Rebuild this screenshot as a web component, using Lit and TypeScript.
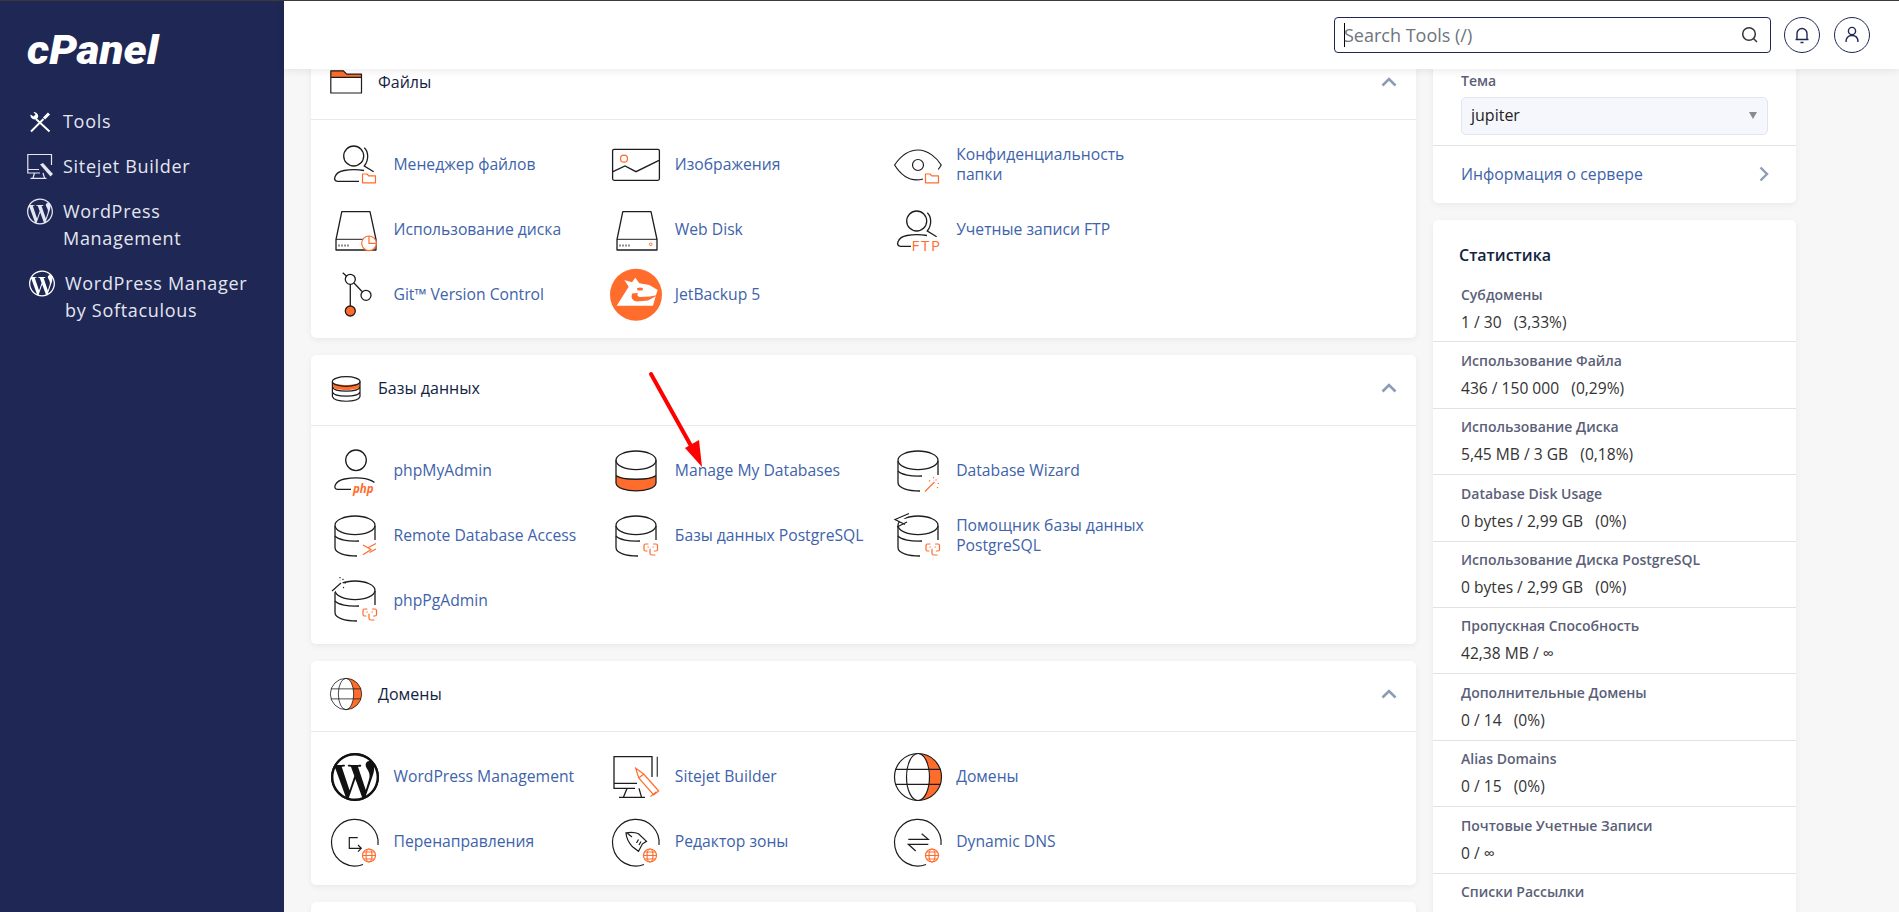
import { LitElement, html, css, svg } from 'lit';
import { customElement } from 'lit/decorators.js';

const INK = '#1d1d1d';
const ORANGE = '#ff6c2c';

const WP_PATH =
  'M21.469 6.825c.84 1.537 1.318 3.3 1.318 5.175 0 3.979-2.156 7.456-5.363 9.325l3.295-9.527c.615-1.54.82-2.771.82-3.864 0-.405-.026-.78-.07-1.11m-7.981.105c.647-.03 1.232-.105 1.232-.105.582-.075.514-.93-.067-.899 0 0-1.755.135-2.88.135-1.064 0-2.85-.15-2.85-.15-.585-.03-.661.855-.075.885 0 0 .54.061 1.125.09l1.68 4.605-2.37 7.08L5.354 6.9c.649-.03 1.234-.1 1.234-.1.585-.075.516-.93-.065-.896 0 0-1.746.138-2.874.138-.2 0-.438-.008-.69-.015C4.911 3.15 8.235 1.215 12 1.215c2.809 0 5.365 1.072 7.286 2.833-.046-.003-.091-.009-.141-.009-1.06 0-1.812.923-1.812 1.914 0 .89.513 1.643 1.06 2.531.411.72.89 1.643.89 2.977 0 .915-.354 2-.821 3.479l-1.075 3.585-3.9-11.61.001.014zM12 22.784c-1.059 0-2.081-.153-3.048-.437l3.237-9.406 3.315 9.087c.024.053.05.101.078.149-1.12.393-2.325.609-3.582.609M1.211 12c0-1.564.336-3.05.935-4.39L7.29 21.709C3.694 19.96 1.212 16.271 1.211 12M12 0C5.385 0 0 5.385 0 12s5.385 12 12 12 12-5.385 12-12S18.615 0 12 0';

// small orange marks that sit in the corner of the tool icons
const folderBadge = svg`<path d="M31.5 41.8V33h4.6l1.6 1.8h6.8v7H31.5z" fill="#fff" stroke=${ORANGE} stroke-width="1.2" stroke-linejoin="round"/>`;
const globeBadge = svg`<g fill="none" stroke=${ORANGE} stroke-width="1.2"><circle cx="38" cy="37.5" r="6.5" fill="#fff"/><ellipse cx="38" cy="37.5" rx="3" ry="6.5"/><path d="M31.5 37.5h13M32.5 34h11M32.5 41h11"/></g>`;
const pgBadge = svg`<g fill="none" stroke=${ORANGE} stroke-width="1.2" stroke-linecap="round"><path d="M36 32h-2.500Q32 32 32 33.500v4Q32 39 33.500 39H35M41.500 32H44q1.500 0 1.500 1.500v4Q45.500 39 44 39h-1.500"/><path d="M38 37v4.500q0 1.500 2 1.500h3"/><path d="M36 35h.4M41 35h.4"/></g>`;
const wandBadge = svg`<g fill="none" stroke=${ORANGE} stroke-width="1.1"><path d="M31 44.500 40.500 35"/><path stroke-dasharray="1.300 2.500" d="M39.500 30v4M45 36.500h-4M42.500 32.500l-1 1M44 41l-2-2M35 33.500l2 1.500"/></g>`;
const remoteBadge = svg`<path d="M32 33l8 4.500-8 5.300M45 31.500 36.500 36M45 37l-6.500 3.500" fill="none" stroke=${ORANGE} stroke-width="1.200"/>`;

// the two-tier database drawing; the lower tier stops short of the badge corner
const dbBase = svg`<g fill="none" stroke=${INK} stroke-width="1.300">
  <ellipse cx="24" cy="13.300" rx="20" ry="9.300"/>
  <path d="M4 14v21.500C4 41 14 44 26 44"/>
  <path d="M44 14v14"/>
  <path d="M4 24c3 3.600 13 5.600 24 5"/>
</g>`;

const disk = svg`<path d="M10.800 5.700h28.200L45 33.500V44H5V33.500L10.800 5.700z" fill="none" stroke=${INK} stroke-width="1.300" stroke-linejoin="round"/><path d="M5 33.300h40M8 40.500v-2M11 40.500v-2M14 40.500v-2M17 40.500v-2" fill="none" stroke=${INK} stroke-width="1"/>`;

const personBack = svg`<g fill="none" stroke=${INK} stroke-width="1.300"><circle cx="22.700" cy="15" r="10"/><path d="M33.300 6.700c3.800 3.400 5.200 11.600 0 18.300l9.400 5.700"/><path d="M28 40.300H6.500c-5 0-3.800-8.800 6.500-10.800 6.800-1.200 14-1 20 0"/></g>`;

const circleOpen = svg`<path d="M32 46.500A23.300 23.300 0 1 1 47 27" fill="none" stroke=${INK} stroke-width="1.200"/>`;

const globeLarge = svg`<g fill="none" stroke=${INK} stroke-width="1.200">
  <path d="M24 .5A23.500 23.500 0 0 1 24 47.500A11.500 23.500 0 0 0 24 .5z" fill=${ORANGE} stroke="none"/>
  <circle cx="24" cy="24" r="23.500"/>
  <ellipse cx="24" cy="24" rx="11.500" ry="23.500"/>
  <path d="M1.500 16.300h45M1.500 31.300h45"/>
</g>`;

const icons: Record<string, unknown> = {
  fileManager: svg`${personBack}${folderBadge}`,
  images: svg`<rect x=".6" y="8.300" width="46.800" height="31" rx="1.500" fill="none" stroke=${INK} stroke-width="1.300"/><circle cx="12" cy="17.700" r="3.500" fill="none" stroke=${ORANGE} stroke-width="1.200"/><path d="M1 30.700 13 25 24 30.700 47 19.300" fill="none" stroke=${INK} stroke-width="1.300"/>`,
  privacy: svg`<path d="M29 38C14 42 5 31 .6 24 6 16 14 9 24 9s19 8 23.200 15c-.6 1.200-1.700 2.800-3 4.500" fill="none" stroke=${INK} stroke-width="1.200"/><circle cx="24" cy="24" r="5.500" fill="none" stroke=${INK} stroke-width="1.200"/>${folderBadge}`,
  diskUsage: svg`${disk}<circle cx="38" cy="37.300" r="7.300" fill="#fff" stroke=${ORANGE} stroke-width="1.200"/><path d="M38 30v7.300h7" fill="none" stroke=${ORANGE} stroke-width="1.200"/>`,
  webDisk: svg`${disk}<circle cx="38.700" cy="38.300" r="1.300" fill="none" stroke=${ORANGE} stroke-width="1"/>`,
  ftp: svg`${personBack}<rect x="17" y="31.600" width="31" height="14" fill="#fff"/><text x="17.500" y="45" font-family="Open Sans, sans-serif" font-size="15" letter-spacing="1.800" fill=${ORANGE}>FTP</text>`,
  git: svg`<g fill="none" stroke=${INK} stroke-width="1.300"><circle cx="19.300" cy="8.300" r="5"/><circle cx="35" cy="24.300" r="5"/><path d="M19.300 13.300V35M23 12l8 8.500M11.700 1.700l4 3.500"/><circle cx="19.300" cy="40" r="5" fill=${ORANGE}/></g>`,
  jetBackup: svg`<circle cx="24" cy="23.700" r="26" fill=${ORANGE}/><path d="M4.700 34.700 16.700 15.700 12.300 9 20 11.300 23.300 6.700 27.300 12.300 37.300 14 45.700 19 44 24 41 34.700z" fill="#fff"/><ellipse cx="28" cy="18" rx="3" ry="1.500" fill=${ORANGE}/><path d="M20 22.500q-2 7 5 8l11-1 10-5.500-8 1.500-10 .5q-4-1-2-4z" fill=${ORANGE}/>`,
  phpMyAdmin: svg`<g fill="none" stroke=${INK} stroke-width="1.300"><circle cx="25" cy="13.300" r="10.300"/><path d="M20 42.300H6.500c-5 0-3-8.500 7-10.300 11-2 23.500-1.500 30 3.500"/></g><text x="22" y="46" font-family="Open Sans, sans-serif" font-size="11.500" font-weight="700" font-style="italic" fill=${ORANGE}>php</text>`,
  manageDb: svg`<path d="M4 28.500c6 5 34 5 40 0V36c-1 10.500-39 10.500-40 0z" fill=${ORANGE}/><g fill="none" stroke=${INK} stroke-width="1.300"><ellipse cx="24" cy="13.300" rx="20" ry="9.300"/><path d="M4 13.300V36c1 10.500 39 10.500 40 0V13.300"/><path d="M4 28.500c6 5 34 5 40 0"/></g>`,
  dbWizard: svg`${dbBase}${wandBadge}`,
  remoteDb: svg`${dbBase}${remoteBadge}`,
  postgres: svg`${dbBase}${pgBadge}`,
  pgWizard: svg`${dbBase}<path d="M13 2 5 7 13 11.500M15 9 6 14" fill="none" stroke="#fff" stroke-width="5"/><path d="M15 1.500 1 7.500 11 12.500M13 10 3 15" fill="none" stroke=${INK} stroke-width="1.200"/>${pgBadge}`,
  pgAdmin: svg`${dbBase}<path d="M0 15 11 5" stroke="#fff" stroke-width="5"/><path d="M1 14 10 6" stroke=${INK} stroke-width="1.200"/><path stroke-dasharray="1.300 2.500" d="M9 0v4M15 6h-4M12.500 2l-1.500 1M13 11l-2-2" stroke=${INK} stroke-width="1.100"/>${pgBadge}`,
  wordpress: svg`<circle cx="24" cy="24" r="23.500" fill="#fff" stroke=${INK} stroke-width="1"/><path transform="scale(2)" fill="#111" d=${WP_PATH}/>`,
  sitejet: svg`<path d="M40 24V3.700H2v31.700h21M2 30.300h23M15 35.400l-3.500 8.700M27 35.400l2.500 8.700M7 44.300h26" fill="none" stroke=${INK} stroke-width="1.300"/><path d="M45.300 3.700v20" stroke="#444" stroke-width="1.300"/><path d="M23.700 15.300l8 5.700 15 17-5 4-15-17zM26.700 25l5-4M38.500 43.500l6-4.800" fill="#fff" stroke=${ORANGE} stroke-width="1.200"/>`,
  domains: globeLarge,
  redirects: svg`${circleOpen}<path d="M26.700 19.700h-8.400V30.300H30M27 27l3.300 3.300-3.300 3.300" fill="none" stroke=${INK} stroke-width="1.200"/>${globeBadge}`,
  zoneEditor: svg`${circleOpen}<path d="M14 14.800c5-.8 9.500-.5 12.500 1l8 7.500-4 2.500-4 7.500-6-4.500c-3.500-3.800-6.300-8.500-6.500-14zM15 15l5 4M24.500 25l2-3.500M27 27l2-3.500" fill="none" stroke=${INK} stroke-width="1.200"/>${globeBadge}`,
  dynDns: svg`${circleOpen}<path d="M14.300 21.300h20L27.700 15.700M34.300 26.300h-20l7.400 6.700" fill="none" stroke=${INK} stroke-width="1.200"/>${globeBadge}`,
};

const headIcons: Record<string, unknown> = {
  files: svg`<path d="M.8 4.800h12.400l3.500 3.300h14.800v3.400H.8z" fill=${ORANGE}/><path d="M.8 4.800h12.400l3.500 3.300h14.800V27H.8zM.8 11.300h30.700" fill="none" stroke=${INK} stroke-width="1.200" stroke-linejoin="round"/>`,
  databases: svg`<path d="M2.500 10c3 4 24.500 4 27.500 0v5c-3 4-24.500 4-27.500 0z" fill=${ORANGE}/><g fill="none" stroke=${INK} stroke-width="1.200"><ellipse cx="16.200" cy="9.500" rx="13.800" ry="4.800"/><path d="M2.400 9.500v15c2 6.300 25.600 6.300 27.600 0v-15M2.400 15c2 5.500 25.600 5.500 27.600 0M2.400 20c2 5.500 25.600 5.500 27.600 0"/></g>`,
  domains: svg`<g transform="scale(.667)">${globeLarge}</g>`,
};

const sections = [
  {
    key: 'files',
    title: 'Файлы',
    items: [
      ['fileManager', 'Менеджер файлов'],
      ['images', 'Изображения'],
      ['privacy', 'Конфиденциальность папки'],
      ['diskUsage', 'Использование диска'],
      ['webDisk', 'Web Disk'],
      ['ftp', 'Учетные записи FTP'],
      ['git', 'Git™ Version Control'],
      ['jetBackup', 'JetBackup 5'],
    ],
  },
  {
    key: 'databases',
    title: 'Базы данных',
    items: [
      ['phpMyAdmin', 'phpMyAdmin'],
      ['manageDb', 'Manage My Databases'],
      ['dbWizard', 'Database Wizard'],
      ['remoteDb', 'Remote Database Access'],
      ['postgres', 'Базы данных PostgreSQL'],
      ['pgWizard', 'Помощник базы данных PostgreSQL'],
      ['pgAdmin', 'phpPgAdmin'],
    ],
  },
  {
    key: 'domains',
    title: 'Домены',
    items: [
      ['wordpress', 'WordPress Management'],
      ['sitejet', 'Sitejet Builder'],
      ['domains', 'Домены'],
      ['redirects', 'Перенаправления'],
      ['zoneEditor', 'Редактор зоны'],
      ['dynDns', 'Dynamic DNS'],
    ],
  },
];

// the last row's value lies below the fold, so it has none here
const stats = [
  ['Субдомены', '1 / 30', '(3,33%)'],
  ['Использование Файла', '436 / 150 000', '(0,29%)'],
  ['Использование Диска', '5,45 MB / 3 GB', '(0,18%)'],
  ['Database Disk Usage', '0 bytes / 2,99 GB', '(0%)'],
  ['Использование Диска PostgreSQL', '0 bytes / 2,99 GB', '(0%)'],
  ['Пропускная Способность', '42,38 MB / ∞', ''],
  ['Дополнительные Домены', '0 / 14', '(0%)'],
  ['Alias Domains', '0 / 15', '(0%)'],
  ['Почтовые Учетные Записи', '0 / ∞', ''],
  ['Списки Рассылки', '', ''],
];

@customElement('app-root')
export class AppRoot extends LitElement {
  static styles = css`
    :host {
      display: flex;
      flex-direction: column;
      height: 100vh;
      overflow: hidden;
      position: relative;
      font-family: 'Open Sans', sans-serif;
      background: #f7f7f7;
      border-top: 1px solid #3a3a3a;
      box-sizing: border-box;
    }

    .shell {
      display: flex;
      flex: 1;
      min-height: 0;
    }

    .sidebar {
      width: 284px;
      flex: none;
      background: #1f2754;
      color: #e4e6f0;
      font-size: 18px;
      line-height: 27px;
      letter-spacing: 0.7px;
      padding: 0 0 0 27px;
      box-sizing: border-box;
    }

    .logo {
      height: 28px;
      margin: 36px 0 43px;
      font-family: 'Roboto', sans-serif;
      font-size: 40px;
      line-height: 28px;
      font-weight: 900;
      font-style: italic;
      letter-spacing: 0;
      color: #fff;
      transform: scaleX(1.1);
      transform-origin: left center;
    }

    .side-link {
      display: flex;
      align-items: flex-start;
      gap: 10px;
      margin-bottom: 18px;
    }

    .side-link svg {
      width: 26px;
      height: 27px;
      flex: none;
    }

    .side-link.shift {
      margin: 17px 0 0 2px;
    }

    .content {
      flex: 1;
      min-width: 0;
      display: flex;
      flex-direction: column;
    }

    .topbar {
      height: 68px;
      flex: none;
      background: #fff;
      box-shadow: 0 2px 8px rgba(0, 0, 0, 0.08);
      display: flex;
      align-items: center;
      justify-content: flex-end;
      gap: 14px;
      padding: 0 29px 0 0;
      position: relative;
      z-index: 2;
    }

    .search {
      width: 437px;
      height: 36px;
      box-sizing: border-box;
      border: 1px solid #1f2754;
      border-radius: 4px;
      display: flex;
      align-items: center;
      margin-right: -1px;
      padding: 0 11px 0 9px;
      font-size: 18px;
      color: #6c757d;
    }

    .caret {
      width: 1px;
      height: 24px;
      background: #000;
      margin-right: -1px;
      flex: none;
    }

    .search span {
      flex: 1;
    }

    .round {
      width: 36px;
      height: 36px;
      box-sizing: border-box;
      border: 1px solid #1f2754;
      border-radius: 50%;
      display: flex;
      align-items: center;
      justify-content: center;
    }

    .body {
      flex: 1;
      min-height: 0;
      display: flex;
      gap: 17px;
      padding: 0 103px 0 27px;
    }

    .tools {
      width: 1105px;
      flex: none;
      margin-top: -20px;
    }

    .aside {
      width: 363px;
      flex: none;
      margin-top: -59px;
    }

    .card {
      background: #fff;
      border-radius: 5px;
      box-shadow: 0 2px 6px rgba(0, 0, 0, 0.06);
      margin-bottom: 17px;
    }

    .card-head {
      box-sizing: border-box;
      border-bottom: 1px solid #e8e8ef;
      height: 71px;
      display: flex;
      align-items: center;
      padding: 0 19px 4px;
      gap: 16px;
      font-size: 16px;
      color: #12233f;
    }

    .card-head svg.mark {
      width: 32px;
      height: 32px;
      flex: none;
      overflow: visible;
    }

    .card-head span {
      flex: 1;
    }

    .items {
      display: grid;
      grid-template-columns: repeat(3, 281.33px);
      grid-auto-rows: 65px;
      padding: 12px 0 11px;
    }

    .item {
      display: flex;
      align-items: center;
      gap: 14.5px;
      padding-left: 20px;
      font-size: 15.7px;
      line-height: 20px;
      color: #3e63aa;
    }

    .item svg {
      width: 48px;
      height: 48px;
      flex: none;
      overflow: visible;
    }

    .item span {
      max-width: 205px;
      padding-bottom: 2px;
    }

    .theme {
      padding: 61px 28px 10px;
      border-bottom: 1px solid #e2e2e2;
    }

    .theme-label {
      font-size: 14px;
      font-weight: 600;
      line-height: 20px;
      color: #5b5f78;
      margin-bottom: 6px;
    }

    .select {
      height: 38px;
      box-sizing: border-box;
      background: #f5f7fc;
      border: 1px solid #e0e5ee;
      border-radius: 5px;
      display: flex;
      align-items: center;
      justify-content: space-between;
      padding: 0 10px 2px 9px;
      font-size: 16px;
      color: #222;
    }

    .select i {
      width: 0;
      height: 0;
      border-left: 4px solid transparent;
      border-right: 4px solid transparent;
      border-top: 7px solid #8a8a8a;
    }

    .info {
      height: 57px;
      box-sizing: border-box;
      display: flex;
      align-items: center;
      justify-content: space-between;
      padding: 0 27px 2px 28px;
      font-size: 15.8px;
      color: #3e63aa;
    }

    .stats-title {
      padding: 23px 26px 9px;
      font-size: 16px;
      line-height: 24px;
      font-weight: 600;
      color: #12233f;
    }

    .stat {
      padding: 8.5px 28px 8.9px;
      border-bottom: 1px solid #e2e2e2;
    }

    .stat-label {
      font-size: 14px;
      font-weight: 600;
      line-height: 20px;
      color: #5b5f78;
      margin-bottom: 7px;
    }

    .stat-value {
      font-size: 15.6px;
      line-height: 21px;
      min-height: 21px;
      color: #333;
      white-space: pre;
    }

    .stub {
      height: 200px;
    }

    .arrow {
      position: absolute;
      left: 640px;
      top: 364px;
      width: 72px;
      height: 110px;
      z-index: 1;
    }
  `;

  private renderCard(s: (typeof sections)[number]) {
    return html`
      <section class="card">
        <div class="card-head">
          <svg class="mark" viewBox="0 0 32 32">${headIcons[s.key]}</svg>
          <span>${s.title}</span>
          <svg width="16" height="10" viewBox="0 0 16 10">
            <path d="M1.500 8.500 8 2l6.500 6.500" fill="none" stroke="#8c9cb5" stroke-width="2.600" />
          </svg>
        </div>
        <div class="items">
          ${s.items.map(
            ([icon, label]) => html`
              <div class="item">
                <svg viewBox="0 0 48 48">${icons[icon]}</svg>
                <span>${label}</span>
              </div>
            `,
          )}
        </div>
      </section>
    `;
  }

  render() {
    return html`
      <div class="shell">
        <nav class="sidebar">
          <div class="logo">cPanel</div>
          <div class="side-link">
            <svg viewBox="0 0 26 27">
              <path d="M4 23.500 16.500 11M22.500 23.500 9 11" fill="none" stroke="#fff" stroke-width="1.900" />
              <path d="M17 10.500l5-5" fill="none" stroke="#fff" stroke-width="3" />
              <path d="M3.500 6.500c-.5 3 2.500 6 6 4.500l1.500-1.500c1-3-1.500-5.500-4.500-5.500l2 2.500-2 2z" fill="#fff" />
            </svg>
            <span>Tools</span>
          </div>
          <div class="side-link">
            <svg viewBox="0 0 26 27">
              <path
                d="M24.500 12V1.500H.8v18.500H13M.8 16.500H12M7.500 20l-1.500 5M16 20l1.500 5M3.500 25.300h16"
                fill="none"
                stroke="#e4e6f0"
                stroke-width="1.200"
              />
              <path d="M13 11.500l3-1.500 10 11-2.500 2.500z" fill="#e4e6f0" />
            </svg>
            <span>Sitejet Builder</span>
          </div>
          <div class="side-link">
            <svg viewBox="0 0 24 24"><path fill="#e4e6f0" d=${WP_PATH} /></svg>
            <span>WordPress<br />Management</span>
          </div>
          <div class="side-link shift">
            <svg viewBox="0 0 24 24"><path fill="#fff" d=${WP_PATH} /></svg>
            <span>WordPress Manager<br />by Softaculous</span>
          </div>
        </nav>

        <div class="content">
          <header class="topbar">
            <div class="search">
              <i class="caret"></i>
              <span>Search Tools (/)</span>
              <svg width="18" height="18" viewBox="0 0 18 18">
                <circle cx="8" cy="8" r="6.300" fill="none" stroke="#333" stroke-width="1.500" />
                <path d="M12.500 12.500 16 16" stroke="#333" stroke-width="1.500" />
              </svg>
            </div>
            <div class="round">
              <svg width="16" height="18" viewBox="0 0 16 18">
                <path
                  d="M3 13V7.500a5 5 0 0 1 10 0V13M1.500 13.500h13M6.500 16.500h3"
                  fill="none"
                  stroke="#1f2754"
                  stroke-width="1.400"
                />
              </svg>
            </div>
            <div class="round">
              <svg width="16" height="18" viewBox="0 0 16 18">
                <circle cx="8" cy="5" r="3.600" fill="none" stroke="#1f2754" stroke-width="1.400" />
                <path d="M2 16c0-4 2-6.500 6-6.500s6 2.500 6 6.500" fill="none" stroke="#1f2754" stroke-width="1.400" />
              </svg>
            </div>
          </header>

          <div class="body">
            <main class="tools">
              ${sections.map((s) => this.renderCard(s))}
              <section class="card stub"></section>
            </main>

            <aside class="aside">
              <section class="card">
                <div class="theme">
                  <div class="theme-label">Тема</div>
                  <div class="select"><span>jupiter</span><i></i></div>
                </div>
                <div class="info">
                  <span>Информация о сервере</span>
                  <svg width="10" height="16" viewBox="0 0 10 16">
                    <path d="M1.500 1.500 8 8l-6.500 6.500" fill="none" stroke="#8c9cb5" stroke-width="2.400" />
                  </svg>
                </div>
              </section>
              <section class="card">
                <div class="stats-title">Статистика</div>
                ${stats.map(
                  ([label, value, pct]) => html`
                    <div class="stat">
                      <div class="stat-label">${label}</div>
                      <div class="stat-value">${value}${pct ? `   ${pct}` : ''}</div>
                    </div>
                  `,
                )}
              </section>
            </aside>
          </div>
        </div>
      </div>

      <svg class="arrow" viewBox="0 0 72 110">
        <path d="M11 9 55 88" stroke="#f00" stroke-width="4" stroke-linecap="round" />
        <path d="M62 102 45 83 59 75z" fill="#f00" />
      </svg>
    `;
  }
}
